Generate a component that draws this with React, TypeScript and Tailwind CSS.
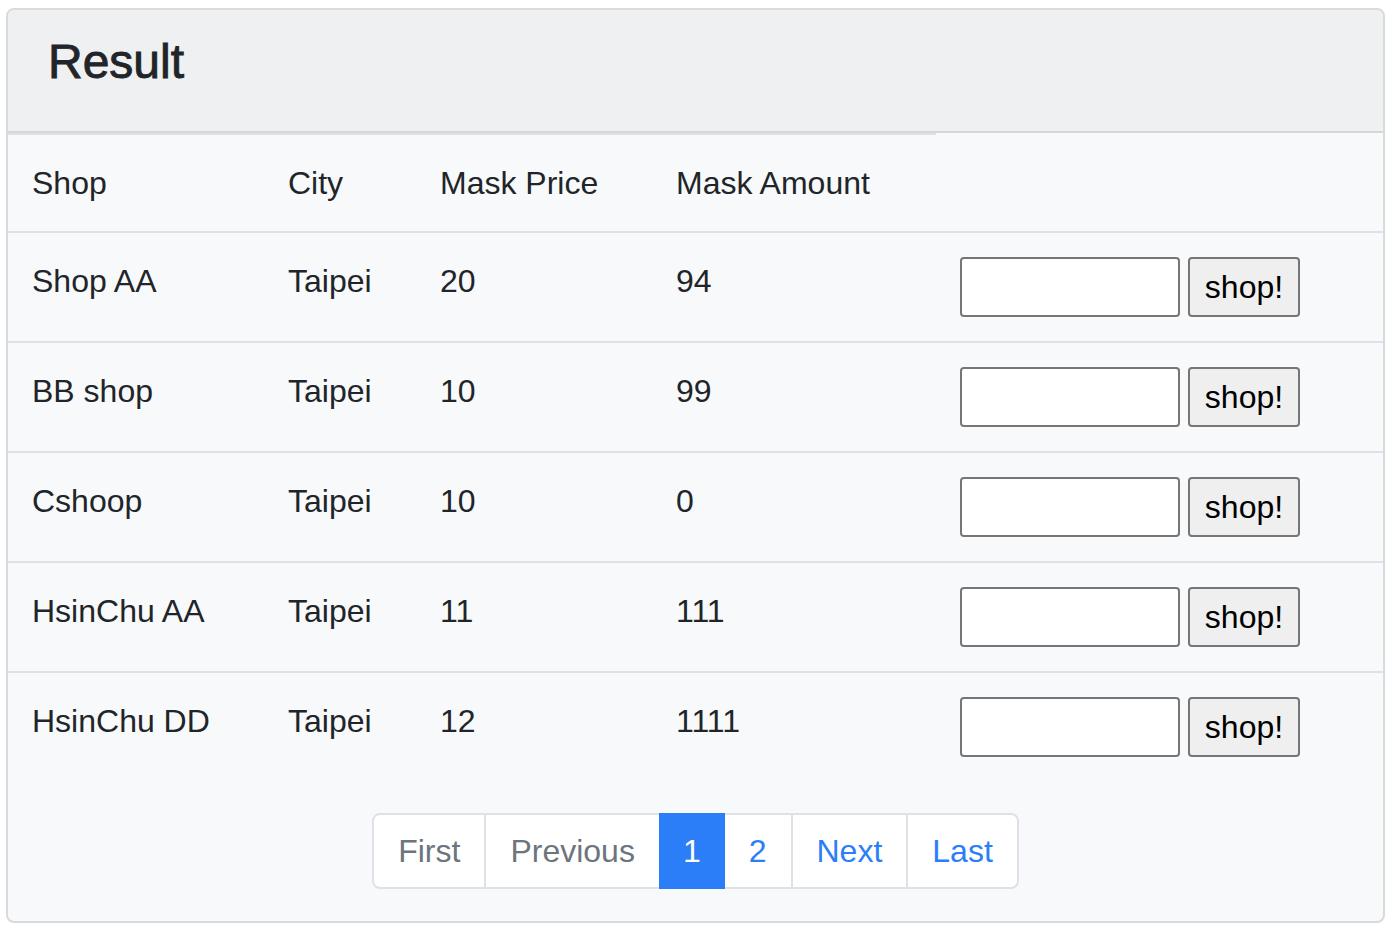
import React from "react";

const rows = [
  { shop: "Shop AA", city: "Taipei", price: "20", amount: "94" },
  { shop: "BB shop", city: "Taipei", price: "10", amount: "99" },
  { shop: "Cshoop", city: "Taipei", price: "10", amount: "0" },
  { shop: "HsinChu AA", city: "Taipei", price: "11", amount: "111" },
  { shop: "HsinChu DD", city: "Taipei", price: "12", amount: "1111" },
];

const pages = [
  { label: "First", kind: "disabled" },
  { label: "Previous", kind: "disabled" },
  { label: "1", kind: "active" },
  { label: "2", kind: "link" },
  { label: "Next", kind: "link" },
  { label: "Last", kind: "link" },
];

export default function App() {
  return (
    <div className="min-h-[930px] bg-white pl-[6px] pt-[8px] text-[#212529] [font-family:'Liberation_Sans',Arial,sans-serif]">
      <div className="w-[1379px] overflow-hidden rounded-[8px] border-2 border-[#d9dadc] bg-[#f8f9fa]">
        <div className="border-b-2 border-[#d6d7d9] bg-[#eff0f2] px-[40px] pb-[24px] pt-[23px]">
          <h4 className="mb-[16px] text-[48px] font-normal leading-[57.6px] [-webkit-text-stroke:0.9px_#212529]">Result</h4>
        </div>

        <table className="mb-[32px] w-full border-collapse text-[32px] leading-[48px]">
          <thead>
            <tr>
              <th className="w-[256px] border-t-2 border-[#dee2e6] p-[24px] text-left font-normal">Shop</th>
              <th className="w-[152px] border-t-2 border-[#dee2e6] p-[24px] text-left font-normal">City</th>
              <th className="w-[236px] border-t-2 border-[#dee2e6] p-[24px] text-left font-normal">Mask Price</th>
              <th className="w-[284px] border-t-2 border-[#dee2e6] p-[24px] text-left font-normal">Mask Amount</th>
              <th className="p-[24px]"></th>
            </tr>
          </thead>
          <tbody>
            {rows.map((r) => (
              <tr key={r.shop}>
                <td className="border-t-2 border-[#dee2e6] p-[24px] align-top">{r.shop}</td>
                <td className="border-t-2 border-[#dee2e6] p-[24px] align-top">{r.city}</td>
                <td className="border-t-2 border-[#dee2e6] p-[24px] align-top">{r.price}</td>
                <td className="border-t-2 border-[#dee2e6] p-[24px] align-top">{r.amount}</td>
                <td className="border-t-2 border-[#dee2e6] p-[24px] align-top">
                  <div className="flex gap-[8px]">
                    <input
                      type="text"
                      className="h-[60px] w-[220px] rounded-[4px] border-2 border-[#767676] bg-white px-2 text-[32px]"
                    />
                    <button
                      type="button"
                      className="h-[60px] w-[112px] rounded-[4px] border-2 border-[#767676] bg-[#efefef] text-[32px] leading-none text-black"
                    >
                      shop!
                    </button>
                  </div>
                </td>
              </tr>
            ))}
          </tbody>
        </table>

        <div className="mb-[32px] flex justify-center">
          <ul className="flex rounded-[8px] text-[32px] leading-[40px]">
            {pages.map((p, i) => (
              <li key={p.label}>
                <span
                  className={
                    "block py-[16px] " +
                    (p.kind === "active" ? "px-[22px] " : "px-[24px] ") +
                    (i === 0 ? "rounded-l-[8px] " : "") +
                    (i === pages.length - 1 ? "rounded-r-[8px] " : "") +
                    (i > 0 ? "-ml-[2px] " : "") +
                    (p.kind === "active"
                      ? "relative z-10 border-2 border-[#2b7ef7] bg-[#2b7ef7] text-white"
                      : p.kind === "disabled"
                        ? "border-2 border-[#dee2e6] bg-white text-[#6c757d]"
                        : "border-2 border-[#dee2e6] bg-white text-[#2b7ef7]")
                  }
                >
                  {p.label}
                </span>
              </li>
            ))}
          </ul>
        </div>
      </div>
    </div>
  );
}
